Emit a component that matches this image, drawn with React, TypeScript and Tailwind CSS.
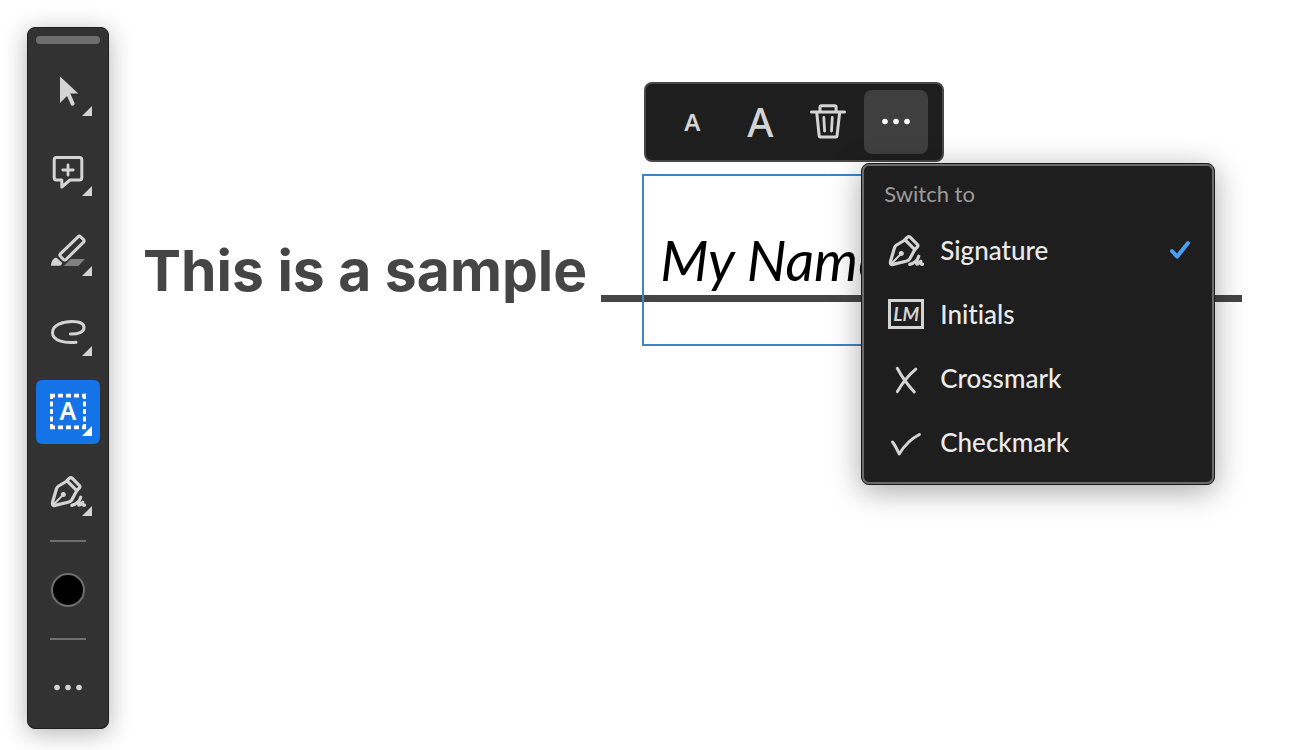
import type { ReactNode } from 'react'

function Corner() {
  return <path d="M46 56H56V46Z" fill="currentColor" />
}

function ToolButton(props: { label: string, active?: boolean, children: ReactNode }) {
  return (
    <button
      type="button"
      aria-label={props.label}
      className={props.active ? "size-16 rounded-md bg-[#1473e6] text-white" : "size-16 rounded-md text-[#d4d4d4]"}
    >
      <svg viewBox="0 0 64 64" className="size-16" fill="none" stroke="none">
        {props.children}
      </svg>
    </button>
  )
}

function PenShape() {
  return (
    <g stroke="currentColor" strokeWidth="3.2" strokeLinecap="round" strokeLinejoin="round" fill="none">
      <path d="M31 21L22.6 26C21.4 26.8 20.9 27.5 20.5 28.8L16.6 42C16 44.8 16.6 46 19 45.4L32 42.2C33.8 41.8 34.8 41.4 35.8 39.8L40.6 31" />
      <path d="M30.8 20.6L33.4 18.2C34.4 17.3 35.2 17.3 36.1 18.2L43.3 25.4C44.1 26.2 44.1 27 43.4 27.9L40.8 30.6Z" />
      <path d="M18 44L26.5 35.4" strokeWidth="2" />
      <circle cx="27.3" cy="34.5" r="2.5" fill="currentColor" stroke="none" />
      <path d="M35.8 45.4C40 44.4 43.8 41 44.8 37.2C43.2 40.2 42 43.4 42.8 45.2C44.4 45.2 45.4 43.4 46.8 42.2C46.4 44 46.8 45.6 48.6 45.2" />
    </g>
  )
}

function Dots() {
  return (
    <g fill="currentColor">
      <circle cx="21" cy="31.5" r="2.8" />
      <circle cx="32" cy="31.5" r="2.8" />
      <circle cx="43" cy="31.5" r="2.8" />
    </g>
  )
}

function Toolbar() {
  return (
    <aside className="flex flex-col items-center gap-4 self-start rounded-lg border border-[#1f1f1f] bg-[#323232] p-2 shadow-[0_4px_24px_rgba(0,0,0,0.3)]">
      <div className="h-2 w-16 rounded-full bg-[#6e6e6e]" />
      <ToolButton label="Select">
        <path d="M24 16.5L42.3 33.5H33.5L24 43Z" fill="currentColor" />
        <path d="M31.5 32L36.6 43.6" stroke="currentColor" strokeWidth="4" strokeLinecap="round" />
        <Corner />
      </ToolButton>
      <ToolButton label="Add comment">
        <path d="M20.5 17.5H43.5A2.3 2.3 0 0 1 45.8 19.8V37.7A2.3 2.3 0 0 1 43.5 40H34L25.8 47V40H20.5A2.3 2.3 0 0 1 18.2 37.7V19.8A2.3 2.3 0 0 1 20.5 17.5Z" stroke="currentColor" strokeWidth="3" strokeLinejoin="round" />
        <path d="M32 24.8V35.2M26.8 30H37.2" stroke="currentColor" strokeWidth="2.8" strokeLinecap="round" />
        <Corner />
      </ToolButton>
      <ToolButton label="Highlight">
        <path d="M34.7 39H49L42.3 46H28Z" fill="#808080" />
        <path d="M42 16.8C42.8 16 43.8 16 44.6 16.8L47.6 19.7C48.4 20.5 48.4 21.3 47.6 22.1L30 39.5C29.2 40.3 28.3 40.3 27.5 39.5L24.4 36.3C23.6 35.5 23.6 34.7 24.4 33.9Z" stroke="currentColor" strokeWidth="3" strokeLinejoin="round" />
        <path d="M15 45.8C15 42.6 16 40.4 18 38.4C18.8 37.6 20.4 37.4 21.2 38.2L25.8 42.6C26.4 43.4 26.2 44 25.5 44.6L24.2 45.8Z" fill="currentColor" />
        <Corner />
      </ToolButton>
      <ToolButton label="Draw freehand">
        <path d="M40 42.3C28 43.5 16.5 40.5 16.5 32.5C16.5 25 27 21.5 36 21.5C43 21.5 48 23.5 48 27.6C48 32.2 42 34.2 34.5 34" stroke="currentColor" strokeWidth="3" strokeLinecap="round" />
        <Corner />
      </ToolButton>
      <ToolButton label="Add text" active>
        <path d="M14 15.6H50M14 47.4H50" stroke="currentColor" strokeWidth="3.6" strokeDasharray="5 3" />
        <path d="M15.5 14V49M48.5 14V49" stroke="currentColor" strokeWidth="3" strokeDasharray="5 2.5" />
        <text x="32" y="40" textAnchor="middle" fill="currentColor" className="font-['Noto_Sans'] text-[25px] font-semibold">A</text>
        <Corner />
      </ToolButton>
      <ToolButton label="Sign">
        <PenShape />
        <Corner />
      </ToolButton>
      <hr className="w-9 border-t-2 border-[#6e6e6e]" />
      <button type="button" aria-label="Color" className="flex size-16 items-center justify-center">
        <span className="size-[34px] rounded-full border-2 border-[#6e6e6e] bg-black" />
      </button>
      <hr className="w-9 border-t-2 border-[#6e6e6e]" />
      <ToolButton label="More tools">
        <Dots />
      </ToolButton>
    </aside>
  )
}

function MenuItem(props: { label: string, checked?: boolean, icon: ReactNode }) {
  return (
    <li role="none">
      <button
        type="button"
        role="menuitemradio"
        aria-checked={props.checked ? true : false}
        className="flex h-16 w-full items-center gap-4 pr-5 pl-6 text-left text-[26px] font-medium text-[#ebebeb] [font-variant-ligatures:none]"
      >
        <span className="flex size-9 items-center justify-center text-[#d4d4d4]">{props.icon}</span>
        <span className="flex-1">{props.label}</span>
        {props.checked && (
          <svg viewBox="0 0 24 24" className="size-6" fill="none">
            <path d="M4 13L9.2 18.6L20 5" stroke="#4b9cf5" strokeWidth="4" strokeLinecap="round" strokeLinejoin="round" />
          </svg>
        )}
      </button>
    </li>
  )
}

function SwitchMenu() {
  return (
    <div className="absolute top-[73px] -left-[3px] z-10 w-[354px] rounded-lg border border-[#1a1a1a] bg-[#1e1e1e] shadow-[0_6px_30px_rgba(0,0,0,0.35)]">
      <div className="rounded-[7px] border-2 border-[#6b6b6b] pb-2">
        <h2 className="px-5 pt-2 pb-1 text-[22px] leading-10 text-[#9c9c9c]">Switch to</h2>
        <ul role="menu" aria-label="Switch to">
          <MenuItem
            label="Signature"
            checked
            icon={<svg viewBox="14 13 36 36" className="size-9"><PenShape /></svg>}
          />
          <MenuItem
            label="Initials"
            icon={
              <span className="flex h-[30px] w-9 items-center justify-center border-3 border-[#d4d4d4] text-[19px] leading-5 font-bold italic">
                LM
              </span>
            }
          />
          <MenuItem
            label="Crossmark"
            icon={
              <svg viewBox="0 0 36 36" className="size-9" fill="none" stroke="currentColor" strokeWidth="3" strokeLinecap="round">
                <path d="M9.3 8.3C14 17.3 20 25.3 26.3 32M27.8 9.2C20.5 15.3 14.5 22.8 9.4 31.6" />
              </svg>
            }
          />
          <MenuItem
            label="Checkmark"
            icon={
              <svg viewBox="0 0 36 36" className="size-9" fill="none" stroke="currentColor" strokeWidth="3" strokeLinecap="round" strokeLinejoin="round">
                <path d="M4.5 18C7 21.2 9 25.2 11.2 30C16 22.2 22 15.2 31.4 10.5" />
              </svg>
            }
          />
        </ul>
      </div>
    </div>
  )
}

function FieldToolbar() {
  return (
    <div className="ml-0.5 flex w-[300px] gap-1 rounded-lg border-2 border-[#484848] bg-[#1e1e1e] px-3.5 py-1.5 text-[#d4d4d4]">
      <button type="button" aria-label="Decrease text size" className="size-16 font-['Noto_Sans'] text-2xl font-semibold">A</button>
      <button type="button" aria-label="Increase text size" className="size-16 font-['Noto_Sans'] text-[40px] leading-none font-medium">A</button>
      <button type="button" aria-label="Delete" className="size-16">
        <svg viewBox="0 0 64 64" className="size-16" fill="none" stroke="currentColor" strokeWidth="3" strokeLinecap="round" strokeLinejoin="round">
          <path d="M15.5 22H48.5M24 21.5V17C24 16.2 24.5 15.7 25.3 15.7H38.8C39.6 15.7 40.1 16.2 40.1 17V21.5" />
          <path d="M20.8 23L23.2 46C23.3 46.8 23.6 47 24.4 47H39.8C40.6 47 40.9 46.8 41 46L43.6 23" />
          <path d="M27.8 27.5L28.6 41M36.3 27.5L35.5 41" strokeWidth="2.8" />
        </svg>
      </button>
      <div className="relative">
        <button type="button" aria-label="More options" aria-haspopup="menu" aria-expanded className="block size-16 rounded-lg bg-[#3f3f3f] text-white">
          <svg viewBox="0 0 64 64" className="size-16">
            <Dots />
          </svg>
        </button>
        <SwitchMenu />
      </div>
    </div>
  )
}

export default function App() {
  return (
    <div className="flex items-start bg-white px-[27px] pt-[27px] pb-[21px] font-[Lato,sans-serif]">
      <Toolbar />
      <main className="flex flex-1 items-end pt-[208px] pr-[41px] pl-[34px]">
        <h1 className="font-[Inter,sans-serif] text-[57px] leading-[72px] font-bold whitespace-nowrap text-[#454545]">
          This is a sample
        </h1>
        <div className="relative mb-[5px] ml-3.5 h-[7px] flex-1 bg-[#454545]">
          <div className="absolute -top-[213px] left-[41px] flex flex-col gap-3">
            <FieldToolbar />
            <div className="h-[172px] w-[400px] border-2 border-[#3d85c6] px-4 pt-[50px] text-[56px] leading-[68px] whitespace-nowrap text-black italic">
              My Name
            </div>
          </div>
        </div>
      </main>
    </div>
  )
}
